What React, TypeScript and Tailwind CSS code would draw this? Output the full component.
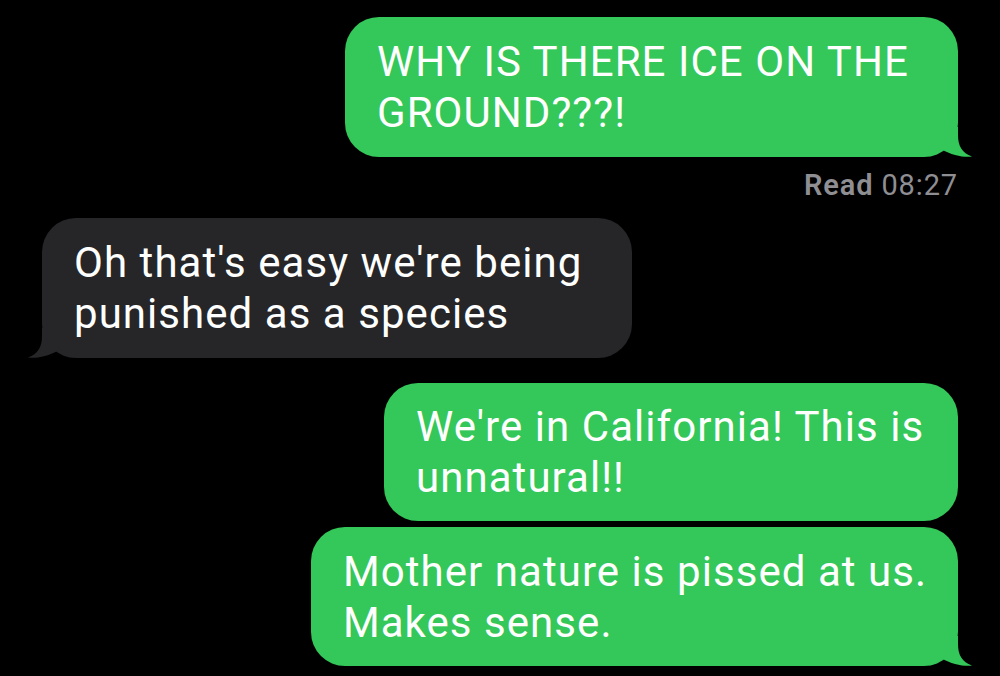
import React from "react";

const GREEN = "#34c759";
const GRAY = "#262628";

function Tail({ color, side }: { color: string; side: "left" | "right" }) {
  return (
    <svg
      width="32"
      height="30"
      viewBox="0 0 32 30"
      className={
        side === "right"
          ? "absolute right-[-15px] bottom-0"
          : "absolute left-[-15px] bottom-0 scale-x-[-1]"
      }
    >
      <path
        d="M17 0 L17 8 C17 19 21 26 31 29.6 C23 30.6 11 28.5 0 22 L0 0 Z"
        fill={color}
      />
    </svg>
  );
}

function Bubble({
  children,
  color,
  tail,
  w,
  h,
}: {
  children: React.ReactNode;
  color: string;
  tail?: "left" | "right";
  w: string;
  h: string;
}) {
  return (
    <div
      className={`relative rounded-[34px] pl-[32px] pr-4 flex items-center text-white text-[42px] leading-[51px] tracking-[0.025em] ${w} ${h}`}
      style={{ backgroundColor: color }}
    >
      {tail && <Tail color={color} side={tail} />}
      <div className="relative">{children}</div>
    </div>
  );
}

export default function App() {
  return (
    <div
      className="w-[1000px] h-[676px] bg-black overflow-hidden flex flex-col px-[42px] pt-[17px]"
      style={{ fontFamily: "Roboto, 'Liberation Sans', sans-serif" }}
    >
      <div className="flex flex-col items-end">
        <Bubble color={GREEN} tail="right" w="w-[613px]" h="h-[140px]">
          WHY IS THERE ICE ON THE
          <br />
          GROUND???!
        </Bubble>
        <div className="h-[61px] pt-[11px] text-[29px] leading-[34px] tracking-[0.03em] text-[#8e8e93]">
          <span className="font-semibold">Read</span> 08:27
        </div>
      </div>
      <div className="flex flex-col items-start">
        <Bubble color={GRAY} tail="left" w="w-[590px]" h="h-[140px]">
          Oh that's easy we're being
          <br />
          punished as a species
        </Bubble>
      </div>
      <div className="flex flex-col items-end mt-[25px] gap-[6px]">
        <Bubble color={GREEN} w="w-[574px]" h="h-[138px]">
          We're in California! This is
          <br />
          unnatural!!
        </Bubble>
        <Bubble color={GREEN} tail="right" w="w-[647px]" h="h-[139px]">
          Mother nature is pissed at us.
          <br />
          Makes sense.
        </Bubble>
      </div>
    </div>
  );
}
